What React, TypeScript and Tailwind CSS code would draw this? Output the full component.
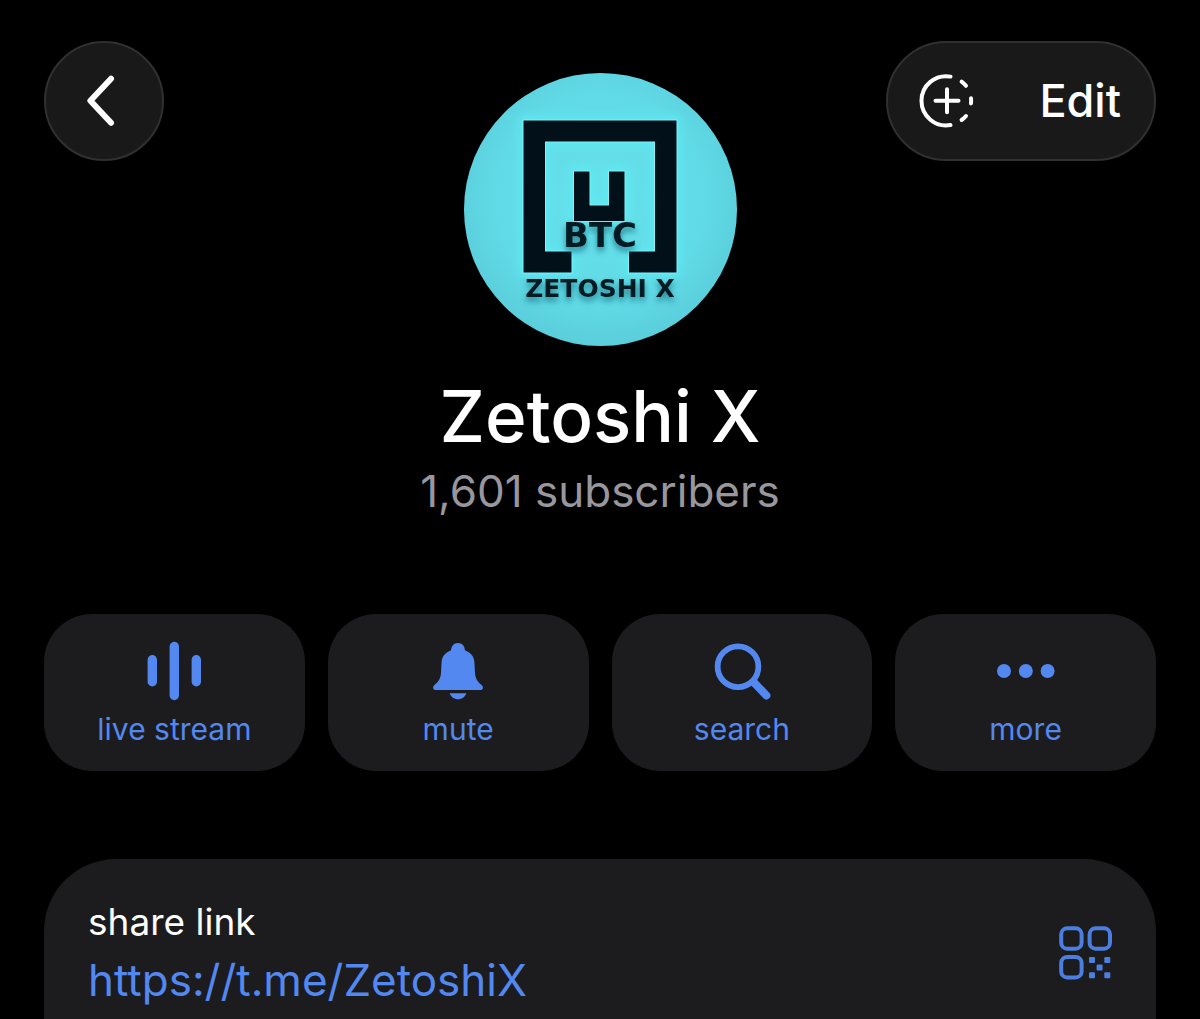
import type { ReactNode } from "react";

/* ── Icons ─────────────────────────────────────────────── */
function ChevronIcon() {
  return (
    <svg width="60" height="60" viewBox="0 0 60 60" fill="none" aria-hidden="true">
      <path
        d="M37 7.8 L16.4 29.8 L37 51.8"
        stroke="white"
        strokeWidth="6"
        strokeLinecap="round"
        strokeLinejoin="round"
      />
    </svg>
  );
}

function StoryIcon() {
  return (
    <svg width="56" height="56" viewBox="0 0 56 56" fill="none" stroke="white" strokeWidth="4" strokeLinecap="round" aria-hidden="true">
      <path d="M31.5 3.6 A24.6 24.6 0 1 0 31.5 52" />
      <path d="M42.6 8.6 A25 25 0 0 1 47 12.8" />
      <path d="M52 25.2 A25 25 0 0 1 52 30.4" />
      <path d="M47 43 A25 25 0 0 1 42.6 47" />
      <path d="M16.5 27.8 H39.5 M28 16.3 V39.3" />
    </svg>
  );
}

function LiveStreamIcon() {
  return (
    <svg width="60" height="60" viewBox="0 0 60 60" fill="currentColor" aria-hidden="true">
      <rect x="3.6" y="14" width="9.4" height="31.5" rx="4.7" />
      <rect x="25.6" y="0.8" width="9.4" height="58.4" rx="4.7" />
      <rect x="47.6" y="14" width="9.4" height="31.5" rx="4.7" />
    </svg>
  );
}

function BellIcon() {
  return (
    <svg width="60" height="60" viewBox="0 0 60 60" fill="currentColor" aria-hidden="true">
      <path d="M30 2 C26 2 23.4 4.8 23 9.2 C17.5 11.5 14 15.2 13.6 21 L13 32 C12.6 37.5 10.5 40.5 7 43.6 C5.3 45.2 4.8 46.2 5.2 47.4 C5.6 48.6 6.6 49 8 49 H52 C53.4 49 54.4 48.6 54.8 47.4 C55.2 46.2 54.7 45.2 53 43.6 C49.5 40.5 47.4 37.5 47 32 L46.4 21 C46 15.2 42.5 11.5 37 9.2 C36.6 4.8 34 2 30 2 Z" />
      <path d="M21.6 52.3 H38.4 C37 56 34 58.3 30 58.3 C26 58.3 23 56 21.6 52.3 Z" />
    </svg>
  );
}

function SearchIcon() {
  return (
    <svg width="60" height="60" viewBox="0 0 60 60" fill="none" stroke="currentColor" strokeLinecap="round" aria-hidden="true">
      <circle cx="26" cy="25.7" r="20.4" strokeWidth="5.8" />
      <path d="M42 41.5 L54.4 54.4" strokeWidth="8" />
    </svg>
  );
}

function MoreIcon() {
  return (
    <svg width="60" height="60" viewBox="0 0 60 60" fill="currentColor" aria-hidden="true">
      <circle cx="8" cy="30" r="7" />
      <circle cx="29.8" cy="30" r="7" />
      <circle cx="51.6" cy="30" r="7" />
    </svg>
  );
}

function QrIcon() {
  return (
    <svg width="54" height="54" viewBox="0 0 54 54" fill="none" stroke="currentColor" strokeWidth="4" aria-hidden="true">
      <rect x="3.2" y="2.3" width="20.4" height="20.4" rx="6" />
      <rect x="31.6" y="2.3" width="20.4" height="20.4" rx="6" />
      <rect x="3.2" y="31" width="20.4" height="20.4" rx="6" />
      <g fill="currentColor" stroke="none">
        <rect x="31" y="31" width="6" height="6" rx="1" />
        <rect x="46.3" y="31" width="6" height="6" rx="1" />
        <rect x="38.6" y="38.6" width="6" height="6" rx="1" />
        <rect x="31" y="46.2" width="6" height="6" rx="1" />
        <rect x="46.3" y="46.2" width="6" height="6" rx="1" />
      </g>
    </svg>
  );
}

/* ── Channel avatar ────────────────────────────────────── */
const framePath =
  "M59.5 47.5 H212.5 V199.5 H165 V178.5 H191 V68.5 H81 V178.5 H107.5 V199.5 H59.5 Z";
const markPath = "M110 98.5 H125.5 V132.5 H145 V98.5 H160.5 V148 H110 Z";

function Avatar() {
  return (
    <svg
      width="273"
      height="273"
      viewBox="0 0 273 273"
      role="img"
      aria-label="Zetoshi X"
      className="rounded-full"
    >
      <defs>
        <radialGradient id="sky" cx="50%" cy="46%" r="56%">
          <stop offset="0" stopColor="#66e2ec" />
          <stop offset="0.7" stopColor="#60dae6" />
          <stop offset="1" stopColor="#5accda" />
        </radialGradient>
        <filter id="glow" x="-20%" y="-20%" width="140%" height="140%">
          <feGaussianBlur stdDeviation="4" />
        </filter>
        <filter id="shade" x="-20%" y="-40%" width="140%" height="200%">
          <feDropShadow dx="0" dy="4" stdDeviation="3" floodColor="#0d5a6b" floodOpacity="0.7" />
        </filter>
      </defs>
      <rect width="273" height="273" fill="url(#sky)" />
      <g fill="none" stroke="#5cebf4" strokeWidth="7" filter="url(#glow)">
        <path d={framePath} />
        <path d={markPath} />
      </g>
      <path d={framePath} fill="#02101a" stroke="#7df3f8" strokeWidth="2" paintOrder="stroke" />
      <path d={markPath} fill="#02101a" stroke="#7df3f8" strokeWidth="2" paintOrder="stroke" />
      <g
        fill="#041a24"
        textAnchor="middle"
        filter="url(#shade)"
        className="font-['DejaVu_Sans',sans-serif] font-bold"
      >
        <text x="136" y="174" fontSize="34">BTC</text>
        <text x="136" y="224" fontSize="25">ZETOSHI X</text>
      </g>
    </svg>
  );
}

/* ── Quick actions ─────────────────────────────────────── */
const actions: { label: string; icon: ReactNode }[] = [
  { label: "live stream", icon: <LiveStreamIcon /> },
  { label: "mute", icon: <BellIcon /> },
  { label: "search", icon: <SearchIcon /> },
  { label: "more", icon: <MoreIcon /> },
];

/* ── Page ──────────────────────────────────────────────── */
export default function App() {
  return (
    <main className="flex min-h-screen flex-col bg-black px-11 pt-[41px] font-['Inter',sans-serif] text-white">

      {/* Top bar with avatar */}
      <header className="grid grid-cols-[1fr_auto_1fr] items-start">
        <button
          type="button"
          aria-label="Back"
          className="flex size-[120px] items-center justify-center rounded-full border-2 border-[#303030] bg-[#191919]"
        >
          <ChevronIcon />
        </button>

        <div className="pt-8">
          <Avatar />
        </div>

        <div className="flex h-[120px] w-[270px] items-center justify-between justify-self-end rounded-full border-2 border-[#303030] bg-[#191919] pr-[33px] pl-[31px]">
          <button type="button" aria-label="Add story">
            <StoryIcon />
          </button>
          <button type="button" className="text-[45px] leading-[60px] font-medium">
            Edit
          </button>
        </div>
      </header>

      {/* Channel name */}
      <div className="mt-7 text-center">
        <h1 className="text-[71px] leading-[84px] font-medium">Zetoshi X</h1>
        <p className="text-[44px] leading-[66px] text-[#98979d]">1,601 subscribers</p>
      </div>

      {/* Actions */}
      <div className="mt-[90px] grid grid-cols-4 gap-[23px]">
        {actions.map((action) => (
          <button
            key={action.label}
            type="button"
            className="flex flex-col items-center gap-[10px] rounded-[48px] bg-[#1c1c1e] pt-[27px] pb-6 text-[#5288f0]"
          >
            {action.icon}
            <span className="text-[30px] leading-9">{action.label}</span>
          </button>
        ))}
      </div>

      {/* Share link */}
      <section className="mt-[88px] flex flex-1 items-start justify-between rounded-t-[72px] bg-[#1c1c1e] px-11 pt-[35px]">
        <div>
          <p className="text-[37px] leading-[56px]">share link</p>
          <a href="https://t.me/ZetoshiX" className="block text-[44px] leading-[60px] text-[#5288f0]">
            https://t.me/ZetoshiX
          </a>
        </div>
        <button type="button" aria-label="Show QR code" className="mt-8 text-[#4a7fe0]">
          <QrIcon />
        </button>
      </section>
    </main>
  );
}
